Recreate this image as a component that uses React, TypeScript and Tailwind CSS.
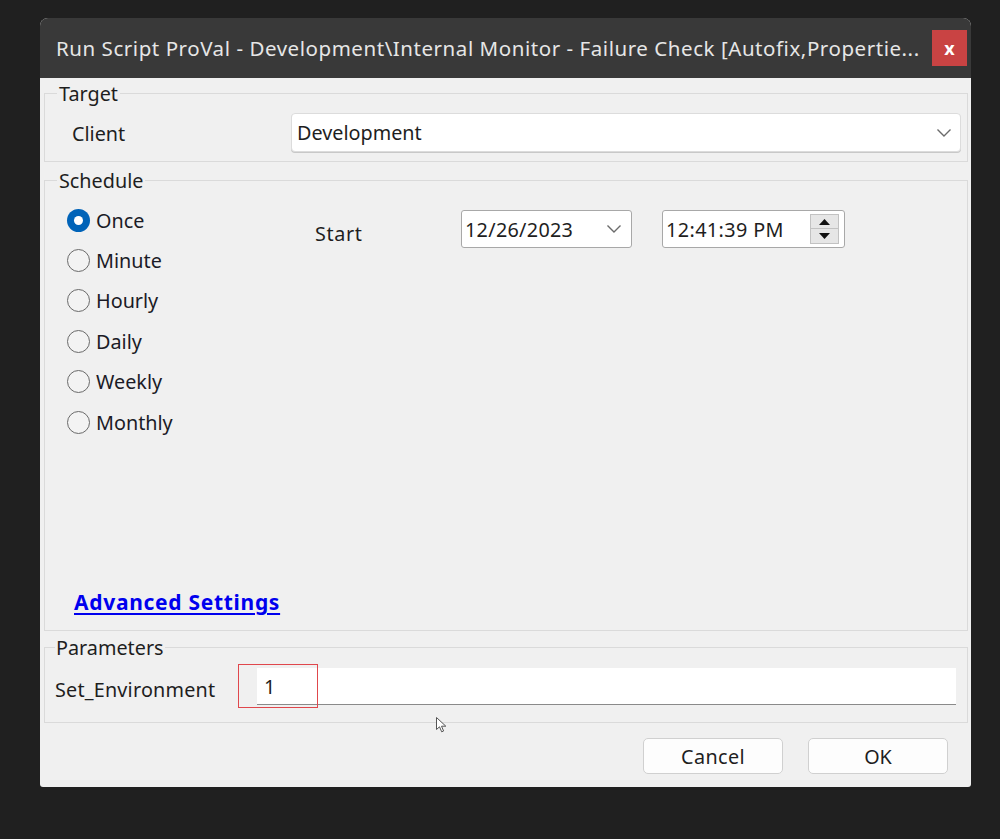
import React from "react";

const font = { fontFamily: '"Noto Sans", "Open Sans", sans-serif' };

function Radio({ label, checked }: { label: string; checked?: boolean }) {
  return (
    <div className="flex h-[40.4px] items-center">
      {checked ? (
        <div className="flex h-[23px] w-[23px] items-center justify-center rounded-full bg-[#0063b8]">
          <div className="h-[9px] w-[9px] rounded-full bg-white" />
        </div>
      ) : (
        <div className="h-[23px] w-[23px] rounded-full border-[1.5px] border-[#6a6a6a] bg-[#f3f3f3]" />
      )}
      <span className="ml-[6px] text-[#1b1b26]">{label}</span>
    </div>
  );
}

function Chevron({ className }: { className?: string }) {
  return (
    <svg className={className} width="16" height="10" viewBox="0 0 16 10" fill="none">
      <path d="M1.5 1.5 L8 8 L14.5 1.5" stroke="#6b6b6b" strokeWidth="1.4" />
    </svg>
  );
}

export default function App() {
  return (
    <div className="relative h-[839px] w-[1000px] overflow-hidden bg-[#202020] pt-[18px] pl-[40px] text-[19.8px] leading-[27px]" style={font}>
      <div className="flex h-[769px] w-[931px] flex-col overflow-hidden rounded-t-[8px] rounded-b-[3px] bg-[#f0f0f0]">
        {/* Title bar */}
        <div className="flex h-[60px] shrink-0 items-center justify-between bg-[#393939] pl-[16px] pr-[4px]">
          <span className="whitespace-nowrap text-[20.5px] tracking-[0.55px] text-[#e6e6e6]">
            Run Script ProVal - Development\Internal Monitor - Failure Check [Autofix,Propertie...
          </span>
          <div className="flex h-[36px] w-[35px] items-center justify-center bg-[#c94343] text-[18px] font-bold text-white">
            x
          </div>
        </div>

        <div className="flex flex-1 flex-col pl-[4px] pr-[3px]">
          {/* Target */}
          <fieldset className="mt-[2px] h-[82px] border border-[#dadada]">
            <legend className="ml-[12px] px-[2px] text-[#1e1e1e]">Target</legend>
            <div className="mt-[6px] flex items-center">
              <span className="ml-[27px] w-[219px] pt-[2px] text-[#1e1e1e]">Client</span>
              <div className="flex h-[39px] w-[670px] items-center justify-between rounded-[4px] border border-[#dcdcdc] bg-white pl-[5px] pr-[8px] shadow-[0_1px_0_#c8c8c8]">
                <span className="text-[#1e1e1e]">Development</span>
                <Chevron />
              </div>
            </div>
          </fieldset>

          {/* Schedule */}
          <fieldset className="mt-[5px] h-[464px] border border-[#dadada]">
            <legend className="ml-[12px] px-[2px] text-[#1e1e1e]">Schedule</legend>
            <div className="flex h-[437px] flex-col">
              <div className="flex pt-[6px]">
                <div className="ml-[22px] flex w-[248px] flex-col">
                  <Radio label="Once" checked />
                  <Radio label="Minute" />
                  <Radio label="Hourly" />
                  <Radio label="Daily" />
                  <Radio label="Weekly" />
                  <Radio label="Monthly" />
                </div>
                <div className="mt-[10px] flex h-[38px] items-center">
                  <span className="w-[146px] pt-[9px] tracking-[0.6px] text-[#1e1e1e]">Start</span>
                  <div className="flex h-[38px] w-[171px] items-center justify-between rounded-[3px] border border-[#a8a8a8] bg-white pl-[3px] pr-[9px]">
                    <span className="tracking-[0.3px] text-[#1e1e1e]">12/26/2023</span>
                    <Chevron />
                  </div>
                  <div className="ml-[30px] flex h-[38px] w-[183px] items-center justify-between rounded-[3px] border border-[#a8a8a8] bg-white pl-[3px] pr-[5px]">
                    <span className="tracking-[0.4px] text-[#1e1e1e]">12:41:39 PM</span>
                    <div className="flex h-[30px] w-[29px] flex-col">
                      <div className="flex h-[15px] items-center justify-center border border-[#c2c2c2] bg-[#e6e6e6]">
                        <svg width="11" height="6" viewBox="0 0 11 6"><path d="M5.5 0 L11 6 L0 6 Z" fill="#111" /></svg>
                      </div>
                      <div className="flex h-[15px] items-center justify-center border border-t-0 border-[#c2c2c2] bg-[#e6e6e6]">
                        <svg width="11" height="6" viewBox="0 0 11 6"><path d="M0 0 L11 0 L5.5 6 Z" fill="#111" /></svg>
                      </div>
                    </div>
                  </div>
                </div>
              </div>
              <div className="mt-auto pb-[15px] pl-[29px]">
                <span className="text-[21px] font-bold tracking-[0.7px] text-[#0000ee] underline decoration-[1.5px] underline-offset-[3px]">
                  Advanced Settings
                </span>
              </div>
            </div>
          </fieldset>

          {/* Parameters */}
          <fieldset className="mt-[3px] h-[89px] border border-[#dadada]">
            <legend className="ml-[10px] px-[1px] text-[#1e1e1e]">Parameters</legend>
            <div className="relative mt-[7px] flex h-[37px] items-center">
              <span className="ml-[10px] w-[202px] pt-[5px] tracking-[0.2px] text-[#1e1e1e]">Set_Environment</span>
              <div className="flex h-[37px] w-[699px] items-center border-b border-[#8a8a8a] bg-white pl-[7px]">
                <span className="text-[#1e1e1e]">1</span>
              </div>
              <div className="pointer-events-none absolute left-[193px] top-[-4px] h-[44px] w-[80px] border border-[#e0474c]" />
            </div>
          </fieldset>

          {/* Buttons */}
          <div className="mt-[15px] flex justify-end gap-[25px] pr-[20px]">
            <div className="flex h-[36px] w-[140px] items-center justify-center rounded-[5px] border border-[#d0d0d0] bg-[#fdfdfd] tracking-[0.4px] text-[#1e1e1e]">
              Cancel
            </div>
            <div className="flex h-[36px] w-[140px] items-center justify-center rounded-[5px] border border-[#d0d0d0] bg-[#fdfdfd] text-[#1e1e1e]">
              OK
            </div>
          </div>
        </div>
      </div>

      {/* mouse cursor */}
      <svg className="pointer-events-none absolute left-[436px] top-[717px]" width="11" height="16" viewBox="0 0 11 16">
        <path d="M0.5 0.5 L0.5 12.5 L3.5 9.8 L5.7 14.8 L7.6 14 L5.5 9.2 L9.8 9.2 Z" fill="#fff" stroke="#555" strokeWidth="1" />
      </svg>
    </div>
  );
}
